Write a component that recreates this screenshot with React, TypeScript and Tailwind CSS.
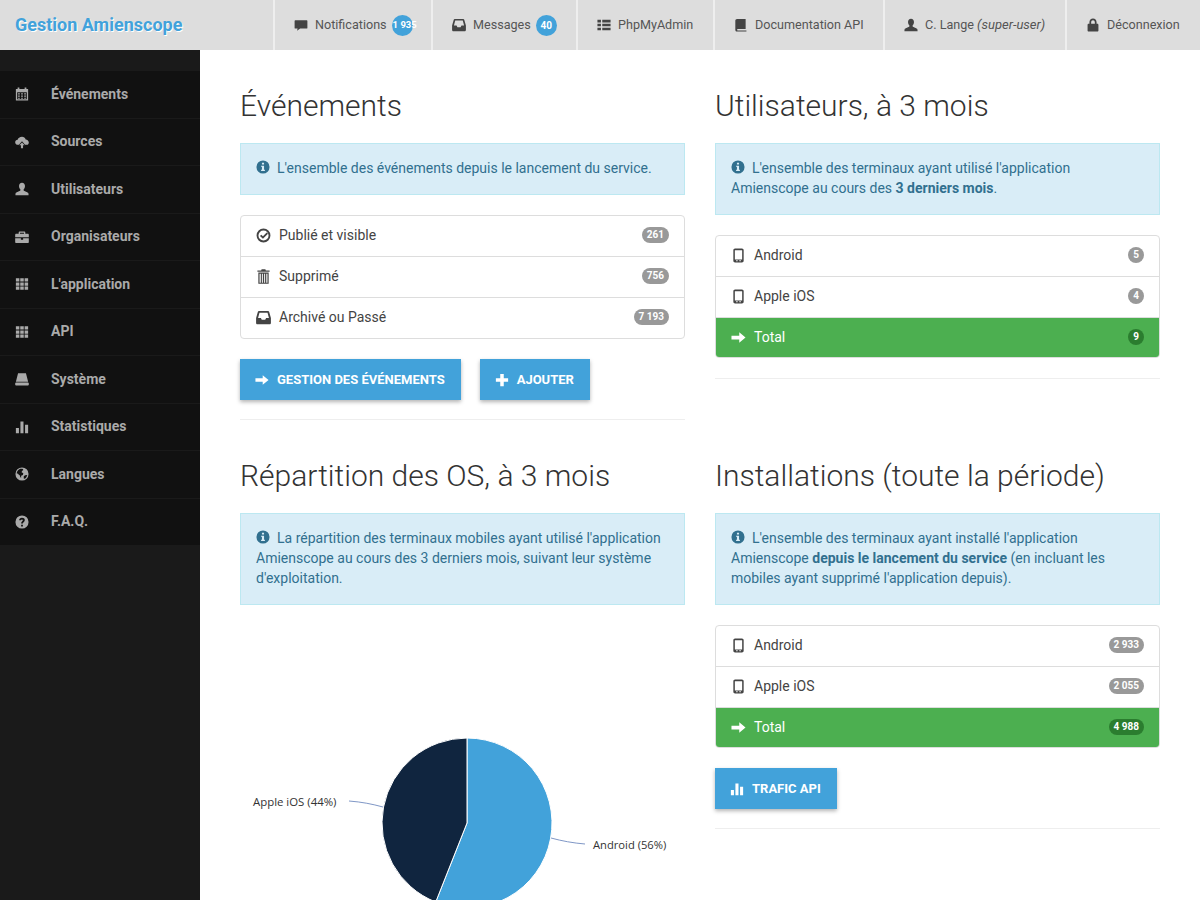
import React from "react";

const icons: Record<string, React.ReactNode> = {
  comment: <path d="M1.500 2.500h13a.8.8 0 0 1 .8.8v8a.8.8 0 0 1-.8.8H7l-3.500 2.600.6-2.600H1.500a.8.8 0 0 1-.8-.8v-8a.8.8 0 0 1 .8-.8z" />,
  inbox: <path fillRule="evenodd" d="M3.200 1h9.600c.6 0 1 .3 1.200.9l1.900 6.600v5.300c0 .8-.6 1.400-1.400 1.400H1.500c-.8 0-1.400-.6-1.400-1.400V8.500L2 1.900C2.200 1.300 2.600 1 3.200 1zm.5 1.800L2.200 8.500h3l1 2h3.600l1-2h3l-1.500-5.700H3.700z" />,
  thlist: <path d="M.5 2h4v3h-4zM6 2h9.500v3H6zM.5 6.500h4v3h-4zM6 6.500h9.500v3H6zM.5 11h4v3h-4zM6 11h9.500v3H6z" />,
  book: <path d="M3.500 1h9.800v11.500H4.200c-.8 0-.9 1.700 0 1.700h10V15.500H3.500C2.300 15.500 1.500 14.600 1.500 13.300V3c0-1.200.8-2 2-2z" />,
  user: <path d="M8 .8c2.200 0 3.400 1.700 3.400 3.800 0 1.500-.6 3-1.500 3.800v1.300c.3.700 4.900 1.700 5.400 3.200.2.700.2 1.600.2 2.300H.5c0-.7 0-1.600.2-2.300.5-1.500 5.100-2.500 5.400-3.200V8.400C5.200 7.600 4.600 6.100 4.600 4.600 4.600 2.500 5.800.8 8 .8z" />,
  lock: <path fillRule="evenodd" d="M8 .6c2.400 0 4.100 1.800 4.100 4.200v1.900h.9c.7 0 1.200.5 1.200 1.200v6.300c0 .7-.5 1.200-1.200 1.200H3c-.7 0-1.200-.5-1.200-1.200V7.900c0-.7.5-1.200 1.200-1.200h.9V4.800C3.900 2.400 5.600.6 8 .6zm0 1.900c-1.200 0-2.100 1-2.100 2.300v1.900h4.200V4.800C10.100 3.500 9.200 2.500 8 2.500z" />,
  calendar: <path fillRule="evenodd" d="M3 .5h2v1.700h6V.5h2v1.700h2v13.300H1V2.200h2V.5zM2.500 6v8h11V6h-11zM3.500 7h2v1.500h-2zM7 7h2v1.500H7zM10.500 7h2v1.500h-2zM3.500 9.700h2v1.500h-2zM7 9.700h2v1.500H7zM10.500 9.700h2v1.500h-2zM3.500 12.300h2v1h-2zM7 12.300h2v1H7zM10.500 12.300h2v1h-2z" />,
  cloud: <path d="M8 2c2 0 3.600 1.200 4.200 3 2 .1 3.600 1.600 3.600 3.500 0 .9-.3 1.500-.7 2.100l-.6.4H11.500L8 7 4.500 11H2C1 10.500.2 9.500.2 8.300.2 6.800 1.400 5.600 3 5.500 3.500 3.500 5.500 2 8 2zM8 8.500l3 3.300H9.200V15H6.800v-3.200H5z" />,
  briefcase: <path fillRule="evenodd" d="M5.200 1.800h5.600c.6 0 1 .4 1 1v1.400h2.800c.7 0 1.200.5 1.200 1.200v2.800H.2V5.400c0-.7.5-1.200 1.200-1.200h2.800V2.800c0-.6.4-1 1-1zm.5 1.300v1.100h4.600V3.100H5.700zM.2 9.300h6.500V11h2.600V9.300h6.500v4.300c0 .7-.5 1.200-1.200 1.200H1.400c-.7 0-1.200-.5-1.200-1.200z" />,
  th: <path d="M1 1.500h4v3.700H1zM6 1.500h4v3.700H6zM11 1.500h4v3.700h-4zM1 6.200h4v3.700H1zM6 6.200h4v3.700H6zM11 6.200h4v3.700h-4zM1 10.900h4v3.700H1zM6 10.900h4v3.700H6zM11 10.900h4v3.700h-4z" />,
  hdd: <path d="M3.500 1.500h9l2.500 9.500H1zM1.300 12h13.400c.7 0 1.100.4 1.100 1v1.300c0 .6-.4 1-1.100 1H1.300c-.7 0-1.100-.4-1.100-1V13c0-.6.4-1 1.100-1z" />,
  stats: <path d="M1 9h3.500v6H1zM6.200 1.800h3.500V15H6.200zM11.500 5.500H15V15h-3.500z" />,
  globe: <path fillRule="evenodd" d="M8 .5a7.500 7.500 0 1 1 0 15 7.500 7.500 0 0 1 0-15zM5 2.500C3.300 3.500 2 5.500 2 7.500c1 0 2 .5 2.500 1.500l1 .5.5 2 1 1v-2.500l2-1 .5-2-2-1L8 4.500l1.500-1L9 2.200C7.500 2 6 2.100 5 2.500zm6.500 7l-1.500 1v2.500l1 .5c1.500-1 2.700-2.800 3-4.500z" />,
  question: <path fillRule="evenodd" d="M8 .5a7.500 7.500 0 1 1 0 15A7.500 7.500 0 0 1 8 .5zM8 3.200c-1.900 0-3.200 1-3.300 2.900h2.100c.1-.7.500-1.100 1.200-1.100.6 0 1 .4 1 .9 0 1-2 1.400-2 3.500v.4h2v-.3c0-1.300 2.200-1.700 2.200-3.900C11.200 4.300 9.900 3.200 8 3.200zM7 11h2v2H7z" />,
  check: <path fillRule="evenodd" d="M8 .6a7.400 7.400 0 1 1 0 14.800A7.400 7.400 0 0 1 8 .6zm0 2a5.400 5.400 0 1 0 0 10.800A5.400 5.400 0 0 0 8 2.600zm3.400 2.200l1.400 1.400L7.400 11.500 4.200 8.500l1.400-1.400 1.800 1.700z" />,
  trash: <path fillRule="evenodd" d="M6 .2h4l.5 1.400h4V3h-13V1.600h4zM2.500 3.800h11v12h-11zM3.800 5v9.600h1.300V5zM6.300 5v9.600h1V5zM8.700 5v9.600h1V5zM11 5v9.600h1.200V5z" />,
  phone: <path fillRule="evenodd" d="M4.300.6h7.400c1 0 1.800.8 1.800 1.800v11.200c0 1-.8 1.800-1.800 1.800H4.300c-1 0-1.800-.8-1.800-1.800V2.400c0-1 .8-1.800 1.800-1.800zm.2 1.700c-.2 0-.4.2-.4.400v9.500h7.800V2.700c0-.2-.2-.4-.4-.4zM5.500 13v1.200h1.600V13zm3.400 0v1.200h1.600V13z" />,
  arrow: <path d="M8.800 2.500L15.500 8l-6.700 5.500V10H.5V6h8.300z" />,
  plus: <path d="M6 1h4v5h5v4h-5v5H6v-5H1V6h5z" />,
  info: <path fillRule="evenodd" d="M8 .5a7.500 7.500 0 1 1 0 15 7.500 7.500 0 0 1 0-15zM6.800 3v2.200h2.400V3zM5.800 6.500v1.300h1v3.300h-1v1.400h4.400v-1.400h-1V6.500z" />,
};

function Icon({ name, className = "" }: { name: string; className?: string }) {
  return (
    <svg viewBox="0 0 16 16" fill="currentColor" className={className}>
      {icons[name]}
    </svg>
  );
}

const navItems = [
  { w: "w-[158px]", icon: "comment", label: "Notifications", badge: "1 935", wide: true },
  { w: "w-[145px]", icon: "inbox", label: "Messages", badge: "40" },
  { w: "w-[137px]", icon: "thlist", label: "PhpMyAdmin" },
  { w: "w-[170px]", icon: "book", label: "Documentation API" },
  { w: "w-[182px]", icon: "user", label: "C. Lange", em: "(super-user)" },
  { w: "w-[135px]", icon: "lock", label: "Déconnexion" },
];

const sideItems = [
  ["calendar", "Événements"],
  ["cloud", "Sources"],
  ["user", "Utilisateurs"],
  ["briefcase", "Organisateurs"],
  ["th", "L'application"],
  ["th", "API"],
  ["hdd", "Système"],
  ["stats", "Statistiques"],
  ["globe", "Langues"],
  ["question", "F.A.Q."],
];

function Section({ title, children }: { title: string; children: React.ReactNode }) {
  return (
    <section className="min-w-0">
      <h2 className="mt-[19px] mb-[21px] text-[30px] leading-[33px] font-light text-[#333]">{title}</h2>
      {children}
    </section>
  );
}

function Alert({ children }: { children: React.ReactNode }) {
  return (
    <div className="mb-[20px] border border-[#bce8f1] bg-[#d9edf7] px-[15px] pt-[14px] pb-[16px] text-[14px] leading-[20px] text-[#31708f]">
      <Icon name="info" className="mr-[7px] inline-block h-[14px] w-[14px] align-[-1px]" />
      {children}
    </div>
  );
}

type Row = { icon: string; label: string; value: string; total?: boolean };

function List({ rows }: { rows: Row[] }) {
  return (
    <div className="mb-[20px] overflow-hidden rounded-[4px] border border-[#ddd]">
      {rows.map((r, i) => (
        <div
          key={r.label}
          className={
            r.total
              ? "-mb-px flex h-[41px] items-center border-t border-[#ddd] bg-[#4caf50] px-[15px] pb-[1px] text-white"
              : i === 0
                ? "flex h-[40px] items-center px-[15px] pb-[1px] text-[#444]"
                : "flex h-[41px] items-center border-t border-[#ddd] px-[15px] pb-[1px] text-[#444]"
          }
        >
          <Icon name={r.icon} className="h-[15px] w-[15px] shrink-0" />
          <span className="ml-[8px] text-[14px]">{r.label}</span>
          <span
            className={
              r.total
                ? "mb-[2px] ml-auto min-w-[16px] rounded-[10px] bg-[#2b7d2f] px-[5px] text-center text-[10px] leading-[16px] font-bold text-white"
                : "mb-[2px] ml-auto min-w-[16px] rounded-[10px] bg-[#999] px-[5px] text-center text-[10px] leading-[16px] font-bold text-white"
            }
          >
            {r.value}
          </span>
        </div>
      ))}
    </div>
  );
}

function Btn({ icon, label }: { icon: string; label: string }) {
  return (
    <a className="flex h-[41px] items-center gap-[8px] bg-[#42a2da] pr-[16px] pl-[15px] text-[13px] font-bold text-white uppercase shadow-[0_2px_4px_rgba(0,0,0,0.3)]">
      <Icon name={icon} className="h-[14px] w-[14px] shrink-0" />
      <span>{label}</span>
    </a>
  );
}

function Pie() {
  const cx = 227;
  const cy = 198;
  const r = 85;
  const a = (201.6 * Math.PI) / 180;
  const ex = cx + r * Math.sin(a);
  const ey = cy - r * Math.cos(a);
  return (
    <svg viewBox="0 0 445 275" className="block h-[275px] w-[445px] overflow-hidden">
      <path d={`M${cx} ${cy}L${cx} ${cy - r}A${r} ${r} 0 1 1 ${ex} ${ey}Z`} fill="#42a2da" stroke="#fff" />
      <path d={`M${cx} ${cy}L${ex} ${ey}A${r} ${r} 0 0 1 ${cx} ${cy - r}Z`} fill="#10253f" stroke="#fff" />
      <path d="M109 176C122 177 132 179 143 182" fill="none" stroke="#7f97c6" />
      <path d="M311 213C322 216 333 218 345 219" fill="none" stroke="#7f97c6" />
      <text x="13" y="181" fontSize="11.4" fill="#333" fontFamily="'Open Sans', sans-serif">Apple iOS (44%)</text>
      <text x="353" y="224" fontSize="11.2" fill="#333" fontFamily="'Open Sans', sans-serif">Android (56%)</text>
    </svg>
  );
}

export default function App() {
  return (
    <div className="flex h-[900px] w-[1200px] flex-col overflow-hidden bg-white font-['Roboto',sans-serif]">
      <header className="flex h-[50px] shrink-0 bg-[#ddd]">
        <div className="w-[273px] pl-[15px] text-[18px] leading-[50px] font-bold text-[#42a2da] [text-shadow:1px_1px_0_#fff]">
          Gestion Amienscope
        </div>
        {navItems.map((n) => (
          <div key={n.label} className={"flex items-center border-l-2 border-[#eee] pl-[19px] text-[12.6px] text-[#555] " + n.w}>
            <Icon name={n.icon} className="h-[14px] w-[14px] shrink-0 text-[#444]" />
            <span className="ml-[7px] whitespace-nowrap">
              {n.label} {n.em && <em className="text-[13px]">{n.em}</em>}
            </span>
            {n.badge && (
              <span
                className={
                  n.wide
                    ? "ml-[5px] flex h-[21px] w-[21px] shrink-0 items-center justify-start rounded-full bg-[#42a2da] pl-[1px] text-[9.5px] font-bold whitespace-nowrap text-white"
                    : "ml-[5px] flex h-[21px] w-[21px] shrink-0 items-center justify-center rounded-full bg-[#42a2da] text-[10px] font-bold whitespace-nowrap text-white"
                }
              >
                {n.badge}
              </span>
            )}
          </div>
        ))}
      </header>
      <div className="flex min-h-0 flex-1">
        <aside className="w-[200px] shrink-0 bg-[#1a1a1a] pt-[21px]">
          {sideItems.map(([icon, label]) => (
            <div key={label} className="flex h-[47.5px] items-center border-b border-[#1a1a1a] bg-[#111] pl-[15px] text-[14px] font-bold text-[#aaa]">
              <Icon name={icon} className="h-[14px] w-[14px] shrink-0" />
              <span className="ml-[22px]">{label}</span>
            </div>
          ))}
        </aside>
        <main className="grid min-w-0 flex-1 grid-cols-2 content-start gap-x-[30px] px-[40px] pt-[20px]">
          <Section title="Événements">
            <Alert>L'ensemble des événements depuis le lancement du service.</Alert>
            <List
              rows={[
                { icon: "check", label: "Publié et visible", value: "261" },
                { icon: "trash", label: "Supprimé", value: "756" },
                { icon: "inbox", label: "Archivé ou Passé", value: "7 193" },
              ]}
            />
            <div className="flex gap-[19px]">
              <Btn icon="arrow" label="Gestion des événements" />
              <Btn icon="plus" label="Ajouter" />
            </div>
            <hr className="mt-[19px] mb-[20px] border-[#eee]" />
          </Section>
          <Section title="Utilisateurs, à 3 mois">
            <Alert>
              L'ensemble des terminaux ayant utilisé l'application Amienscope au cours des <b className="font-bold">3 derniers mois</b>.
            </Alert>
            <List
              rows={[
                { icon: "phone", label: "Android", value: "5" },
                { icon: "phone", label: "Apple iOS", value: "4" },
                { icon: "arrow", label: "Total", value: "9", total: true },
              ]}
            />
            <hr className="border-[#eee]" />
          </Section>
          <Section title="Répartition des OS, à 3 mois">
            <Alert>
              La répartition des terminaux mobiles ayant utilisé l'application Amienscope au cours des 3 derniers mois, suivant leur système d'exploitation.
            </Alert>
            <Pie />
          </Section>
          <Section title="Installations (toute la période)">
            <Alert>
              L'ensemble des terminaux ayant installé l'application Amienscope <b className="font-bold">depuis le lancement du service</b> (en incluant les mobiles ayant supprimé l'application depuis).
            </Alert>
            <List
              rows={[
                { icon: "phone", label: "Android", value: "2 933" },
                { icon: "phone", label: "Apple iOS", value: "2 055" },
                { icon: "arrow", label: "Total", value: "4 988", total: true },
              ]}
            />
            <div className="flex">
              <Btn icon="stats" label="Trafic API" />
            </div>
            <hr className="mt-[19px] border-[#eee]" />
          </Section>
        </main>
      </div>
    </div>
  );
}
